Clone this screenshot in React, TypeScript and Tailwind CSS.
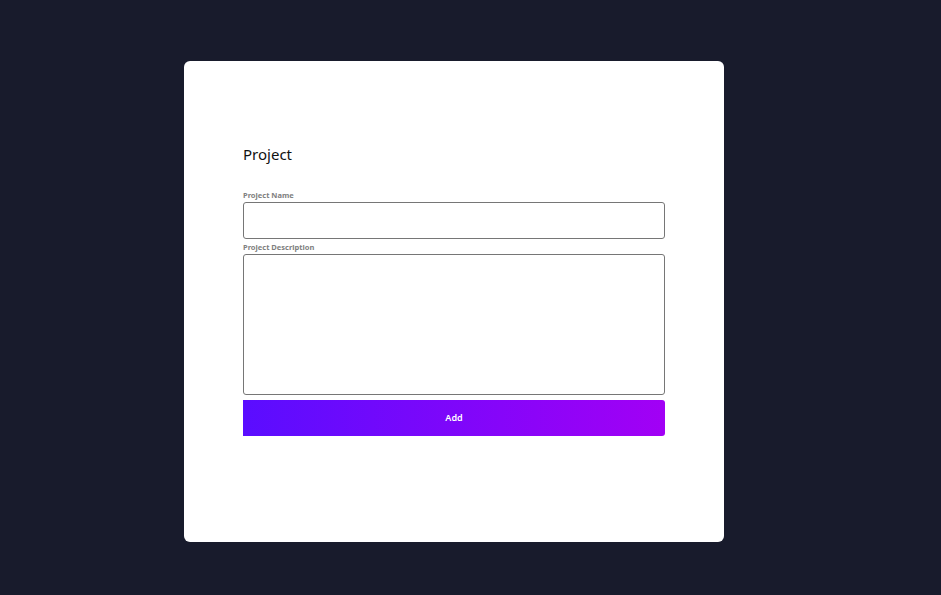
export default function App() {
  return (
    <div className="min-h-screen w-full bg-[#181b2c] pt-[61px] pl-[184px]" style={{ fontFamily: '"Noto Sans", "Open Sans", sans-serif' }}>
      <div className="flex h-[481px] w-[540px] flex-col rounded-[6px] bg-white px-[59px] pt-[82px]">
        <h1 className="h-[22px] text-[15px] leading-[22px] text-[#111]">Project</h1>

        <form className="mt-[25px] flex flex-col">
          <label className="mb-[2px] h-[10px] text-[7.5px] font-bold leading-[10px] text-[#808080]">Project Name</label>
          <input className="h-[37px] w-full rounded-[3px] border border-[#767676] outline-none" />

          <label className="mt-[3px] mb-[2px] h-[10px] text-[7.5px] font-bold leading-[10px] text-[#808080]">
            Project Description
          </label>
          <textarea className="h-[141px] w-full resize-none rounded-[3px] border border-[#767676] outline-none" />

          <button
            type="button"
            className="mt-[5px] h-[36px] w-full rounded-r-[3px] bg-[linear-gradient(to_right,#5a0dff,#a200f5)] text-[9px] font-semibold text-white"
          >
            Add
          </button>
        </form>
      </div>
    </div>
  )
}
